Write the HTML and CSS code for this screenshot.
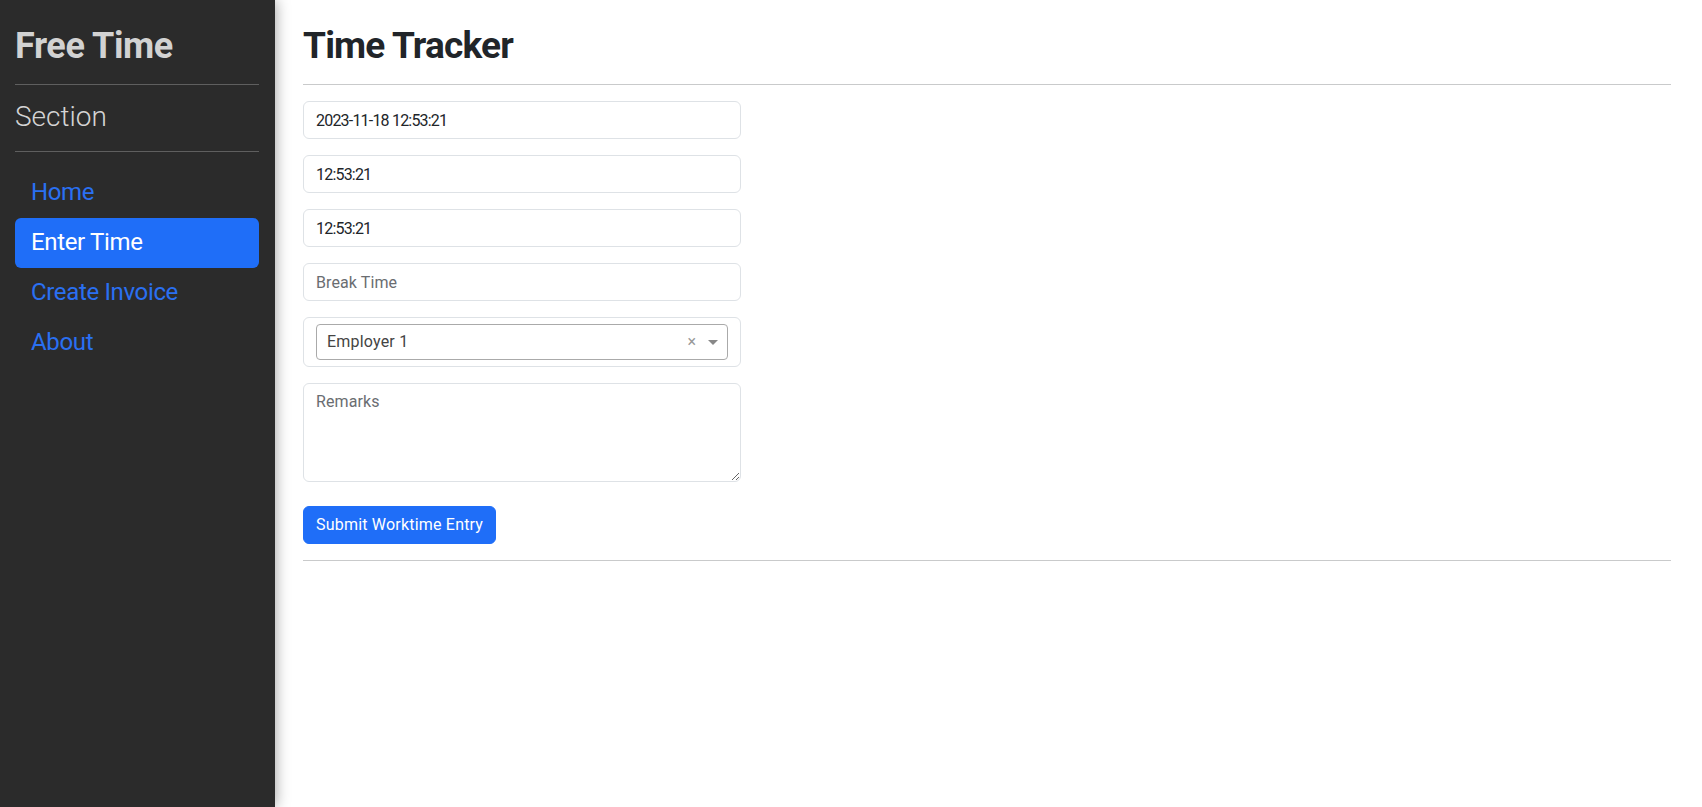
FILE: index.html
```html
<!DOCTYPE html>
<html lang="en">
<head>
<meta charset="utf-8">
<title>Time Tracker</title>
<link rel="stylesheet" href="styles.css">
</head>
<body>
<div class="layout">
  <aside class="sidebar">
    <h1 class="brand">Free Time</h1>
    <hr class="side-rule">
    <div class="section-title">Section</div>
    <hr class="side-rule">
    <nav class="nav">
      <a class="nav-link" href="#">Home</a>
      <a class="nav-link active" href="#">Enter Time</a>
      <a class="nav-link" href="#">Create Invoice</a>
      <a class="nav-link" href="#">About</a>
    </nav>
  </aside>
  <main class="main">
    <h1 class="page-title">Time Tracker</h1>
    <hr class="rule">
    <form class="entry-form">
      <input class="field num" type="text" value="2023-11-18 12:53:21">
      <input class="field num" type="text" value="12:53:21">
      <input class="field num" type="text" value="12:53:21">
      <input class="field" type="text" placeholder="Break Time">
      <div class="select-wrap">
        <div class="select-box">
          <span class="select-value">Employer 1</span>
          <span class="select-clear">×</span>
          <span class="select-arrow"></span>
        </div>
      </div>
      <textarea class="field area" placeholder="Remarks"></textarea>
      <button class="btn-primary" type="button">Submit Worktime Entry</button>
    </form>
    <hr class="rule">
  </main>
</div>
</body>
</html>
```
FILE: styles.css
```css
* { box-sizing: border-box; }
html, body { margin: 0; padding: 0; height: 100%; }
body {
  font-family: Roboto, "Liberation Sans", sans-serif;
  font-size: 16px;
  color: #212529;
  background: #fff;
}
.layout {
  display: flex;
  min-height: 100vh;
}
.sidebar {
  position: relative;
  z-index: 1;
  width: 275px;
  flex: 0 0 275px;
  background: #2b2b2b;
  padding: 0 16px 0 15px;
  box-shadow: 0 0 14px rgba(0, 0, 0, 0.4);
  display: flex;
  flex-direction: column;
}
.brand {
  margin: 22px 0 0;
  font-size: 36px;
  line-height: 48px;
  font-weight: 700;
  color: #d2d2d2;
  letter-spacing: -0.4px;
}
.side-rule {
  margin: 14px 0 0;
  border: 0;
  border-top: 1px solid #5f5f5f;
  height: 0;
}
.section-title {
  margin: 15px 0 17px;
  font-size: 28px;
  line-height: 34px;
  font-weight: 300;
  color: #d4d4d4;
}
.section-title + .side-rule { margin-top: 0; }
.nav {
  display: flex;
  flex-direction: column;
  margin-top: 16px;
}
.nav-link {
  display: block;
  padding: 7px 16px 9px;
  font-size: 24px;
  line-height: 34px;
  letter-spacing: -0.35px;
  color: #2a70f2;
  text-decoration: none;
  border-radius: 6px;
}
.nav-link.active {
  background: #1f6ef8;
  color: #fff;
}
.main {
  flex: 1;
  padding: 0 31px 0 28px;
}
.page-title {
  margin: 22px 0 0;
  font-size: 37px;
  line-height: 48px;
  font-weight: 700;
  color: #212529;
  letter-spacing: -0.8px;
}
.rule {
  margin: 14px 0 16px;
  border: 0;
  border-top: 1px solid #c9cacb;
  height: 0;
}
.entry-form {
  width: 438px;
  display: flex;
  flex-direction: column;
}
.field {
  display: block;
  width: 100%;
  height: 38px;
  margin: 0 0 16px;
  padding: 6px 12px;
  border: 1px solid #dee2e6;
  border-radius: 6px;
  font-family: inherit;
  font-size: 16px;
  line-height: 24px;
  color: #212529;
  background: #fff;
}
.field.num { letter-spacing: -0.8px; }
.field::placeholder { color: #6a6d71; letter-spacing: 0.1px; }
.area {
  height: 99px;
  resize: vertical;
  margin-bottom: 24px;
}
.select-wrap {
  height: 50px;
  margin: 0 0 16px;
  padding: 6px 12px;
  border: 1px solid #dee2e6;
  border-radius: 6px;
}
.select-box {
  height: 36px;
  border: 1px solid #aaa;
  border-radius: 4px;
  display: flex;
  align-items: center;
  padding: 0 9px 0 10px;
}
.select-value {
  flex: 1;
  color: #444;
  font-size: 16px;
  line-height: 34px;
  letter-spacing: 0.2px;
}
.select-clear {
  color: #999;
  font-size: 16px;
  line-height: 34px;
  margin-right: 12px;
}
.select-arrow {
  width: 0;
  height: 0;
  border-style: solid;
  border-width: 5px 5px 0;
  border-color: #888 transparent transparent;
}
.btn-primary {
  align-self: flex-start;
  height: 38px;
  padding: 6px 12px;
  border: 1px solid #1f6ef8;
  border-radius: 6px;
  background: #1f6ef8;
  color: #fff;
  font-family: inherit;
  font-size: 16px;
  line-height: 24px;
  letter-spacing: 0.2px;
  margin: 0 0 16px;
}
.entry-form + .rule { margin-top: 0; }
```
